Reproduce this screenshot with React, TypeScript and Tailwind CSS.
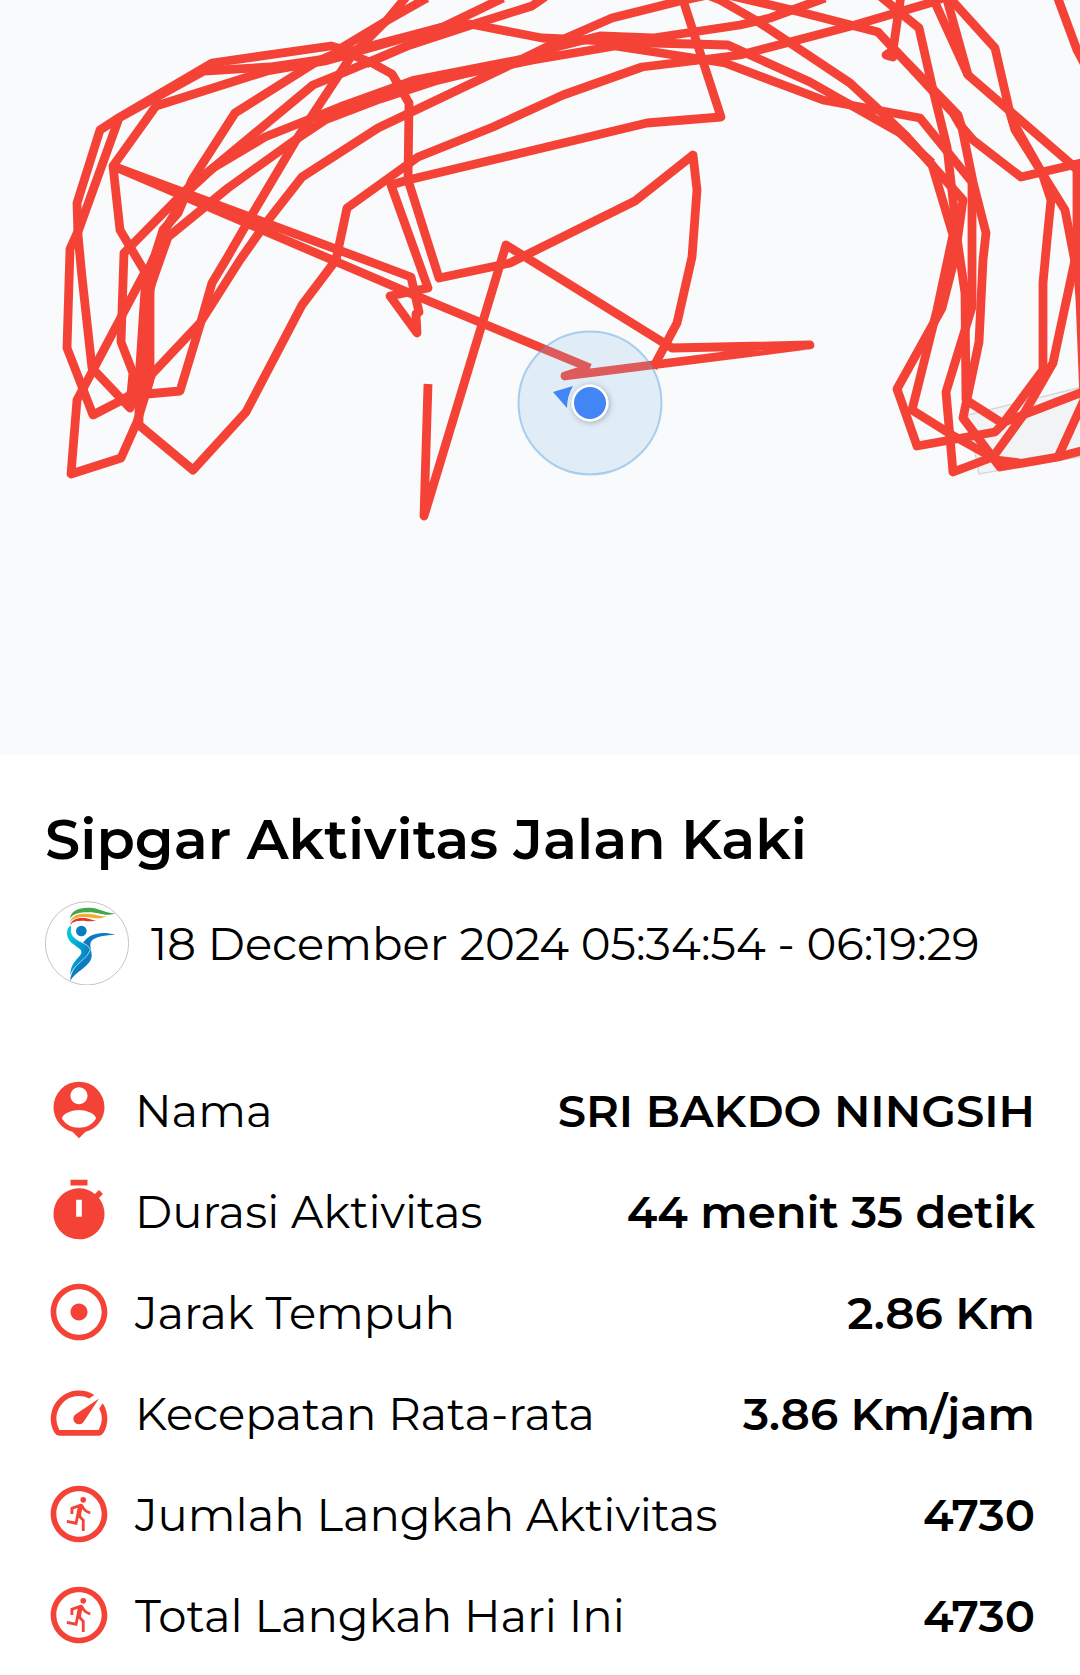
import type { IconType } from "react-icons";
import {
  MdAdjust,
  MdOutlineRunCircle,
  MdPersonPin,
  MdSpeed,
  MdTimer,
} from "react-icons/md";

type Stat = { icon: IconType; label: string; value: string };

const stats: Stat[] = [
  { icon: MdPersonPin, label: "Nama", value: "SRI BAKDO NINGSIH" },
  { icon: MdTimer, label: "Durasi Aktivitas", value: "44 menit 35 detik" },
  { icon: MdAdjust, label: "Jarak Tempuh", value: "2.86 Km" },
  { icon: MdSpeed, label: "Kecepatan Rata-rata", value: "3.86 Km/jam" },
  { icon: MdOutlineRunCircle, label: "Jumlah Langkah Aktivitas", value: "4730" },
  { icon: MdOutlineRunCircle, label: "Total Langkah Hari Ini", value: "4730" },
];

// Walked laps, in map units
const track = [
  // west side
  "345,50 331,46 212,63 120,117 100,130 77,203 78,235 82,277 92,368 130,408 135,392",
  "345,56 270,67 204,71 119,118 79,229 70,249 67,348 93,415 122,400 138,390",
  "350,54 325,61 267,71 156,106 113,166 120,230 145,272 92,372 77,400 71,474 121,458 137,422 150,380",
  "350,47 316,62 235,113 192,180 178,213 163,230 155,255 146,275 139,380 139,425 193,470 246,412 302,305 336,260 347,208 418,157 493,127 563,95 642,67 700,60 740,55 790,42 855,25 933,2 950,-5",
  "407,46 345,72 313,85 213,168 187,192 165,230 150,290 150,375 140,405",
  "415,80 340,107 265,137 213,168 187,189 124,253 121,342 133,373 130,405",
  "533,57 435,81 380,99 325,120 295,140 228,188 168,237 150,288 144,390",
  "407,-4 387,20 352,55 298,137 253,213 227,258 212,283 200,325 180,391 147,394 135,392",
  "740,-12 680,1 612,18 557,42 510,65 378,128 302,177 266,223 240,260 200,323 152,374 140,405",
  // north side
  "427,-2 388,20 338,50",
  "503,-2 443,27 340,54",
  "545,-3 532,6 468,26 407,46 366,64",
  "345,55 443,27 470,24 542,38 653,43 728,45 810,82 847,103 900,133 932,163",
  "340,109 415,80 533,57 560,46 600,36 653,38 740,25 770,18 825,-2",
  "437,79 533,60 615,46 700,59 725,63 823,100 920,118 972,182 972,307 946,392 953,472 993,457 1022,417 1053,363 1075,260",
  "700,-8 720,0 757,21 850,83 877,108 905,135 932,165 963,200 955,257 942,308 897,389 917,446 995,432 1002,425 1043,370 1043,283 1047,240 1051,200 1042,173 1012,120",
  "715,-8 792,10 878,32 953,113 960,125 973,140 1021,177 1085,162",
  // inner detours
  "113,166 407,292 590,368",
  "113,166 411,277 419,312 416,314 417,333 390,296 428,288 391,185 408,180 647,123 721,117 683,0 680,-8",
  "340,50 372,63 392,74 409,103 408,180 439,278 510,263 635,201 693,155 697,190 692,257 677,323 653,368",
  "428,384 424,516 506,245 672,348 810,345 565,376 590,368",
  // east side
  "880,-4 919,28 933,90 947,147 953,200 958,245 965,293 966,400 1002,423 1085,391",
  "901,-5 893,50 886,55 893,57 893,50",
  "895,50 958,115 962,128 973,182 986,233 983,260 979,342 963,418 1000,467 1058,457 1085,450",
  "905,135 932,165 953,235 937,310 912,410 952,435 997,460 1020,463",
  "932,-4 968,75 1070,163 1077,170 1077,260 1080,300 1084,400 1058,457",
  "946,-4 968,75",
  "948,-4 995,48 1010,113 1015,130 1042,173 1065,210 1075,262 1080,285",
  "1057,-4 1077,50 1085,65",
];

function RouteMap() {
  return (
    <svg viewBox="0 0 1080 755" className="block w-full bg-[#f8fafc]" role="img" aria-label="Peta rute">
      <defs>
        <filter id="dotShadow" x="-50%" y="-50%" width="200%" height="200%">
          <feDropShadow dx="1" dy="1" stdDeviation="3" floodColor="#000" floodOpacity="0.3" />
        </filter>
      </defs>

      {/* Building */}
      <path d="M968 415 L1090 385 V455 L979 474 Z" fill="#f1f3f4" stroke="#d5d8da" strokeWidth="1.5" />

      {/* Track */}
      <g fill="none" stroke="#f44336" strokeWidth="8.8" strokeLinejoin="round">
        {track.map((points) => (
          <polyline key={points} points={points} />
        ))}
      </g>

      {/* Current position */}
      <circle cx="590" cy="403" r="71.5" fill="#8abfe8" fillOpacity="0.21" stroke="#4a96dc" strokeOpacity="0.42" strokeWidth="2" />
      <path d="M553 392 L573 386 Q567 396 567 408 Z" fill="#4285f4" />
      <circle cx="590" cy="403" r="18.5" fill="#fff" filter="url(#dotShadow)" />
      <circle cx="590" cy="403" r="16" fill="#4285f4" />
    </svg>
  );
}

function Logo() {
  return (
    <svg viewBox="27 33 252 252" className="size-[84px] shrink-0" aria-hidden="true">
      <defs>
        <linearGradient id="body" x1="95" y1="150" x2="165" y2="180" gradientUnits="userSpaceOnUse">
          <stop offset="0" stopColor="#00c8dc" />
          <stop offset="1" stopColor="#0a7cc0" />
        </linearGradient>
      </defs>
      <circle cx="153" cy="160" r="125" fill="#fff" stroke="#a8a8a8" strokeWidth="2" />
      <path d="M102 86 C104 62 128 52 160 53 C192 54 208 70 238 70 C205 82 190 66 158 67 C132 67 112 70 102 86 Z" fill="#43a648" />
      <path d="M102 98 C104 78 126 70 150 71 C175 71 190 80 211 79 C186 92 168 80 145 81 C122 82 110 84 102 98 Z" fill="#f2ac29" />
      <path d="M103 107 C104 90 122 83 142 84 C158 84 165 91 181 90 C160 98 150 91 135 92 C118 93 108 95 103 107 Z" fill="#e1352f" />
      <path d="M140 160 C158 130 196 122 238 134 C200 135 172 142 165 155 C160 164 166 176 166 190 C158 180 150 168 140 160 Z" fill="#0a7cc0" />
      <path d="M103 107 C88 118 90 145 108 160 C126 174 138 178 136 188 C132 205 104 212 103 256 C114 226 154 214 163 180 C158 160 118 155 107 132 C102 122 108 113 103 107 Z" fill="url(#body)" />
      <path d="M163 179 C150 212 104 225 103 273 C120 242 168 228 167 196 C167 190 165 184 163 179 Z" fill="#0a7cc0" />
      <path d="M107 134 C120 156 156 158 163 179 C154 208 112 222 104 256" fill="none" stroke="#fff" strokeWidth="2" />
      <circle cx="136" cy="123" r="16" fill="#0a7cc0" />
    </svg>
  );
}

export default function App() {
  return (
    <div className="min-h-screen bg-white font-['Montserrat','Inter',sans-serif] text-black">
      <RouteMap />

      <main className="px-[45px] pt-12">
        <h1 className="text-[56px] leading-[72px] font-semibold">Sipgar Aktivitas Jalan Kaki</h1>

        <div className="mt-[26px] flex items-center gap-[22px]">
          <Logo />
          <p className="pt-0.5 text-[45px] leading-[56px] font-normal">18 December 2024 05:34:54 - 06:19:29</p>
        </div>

        {/* Activity details */}
        <dl className="mt-[74px]">
          {stats.map(({ icon: Icon, label, value }) => (
            <div key={label} className="flex h-[101px] items-center justify-between">
              <dt className="flex items-center gap-[22px] text-[45px] leading-[56px] font-normal">
                <Icon className="size-[68px] shrink-0 text-[#f44336]" />
                <span className="pt-0.5">{label}</span>
              </dt>
              <dd className="pt-0.5 text-[45px] leading-[56px] font-semibold">{value}</dd>
            </div>
          ))}
        </dl>
      </main>
    </div>
  );
}
